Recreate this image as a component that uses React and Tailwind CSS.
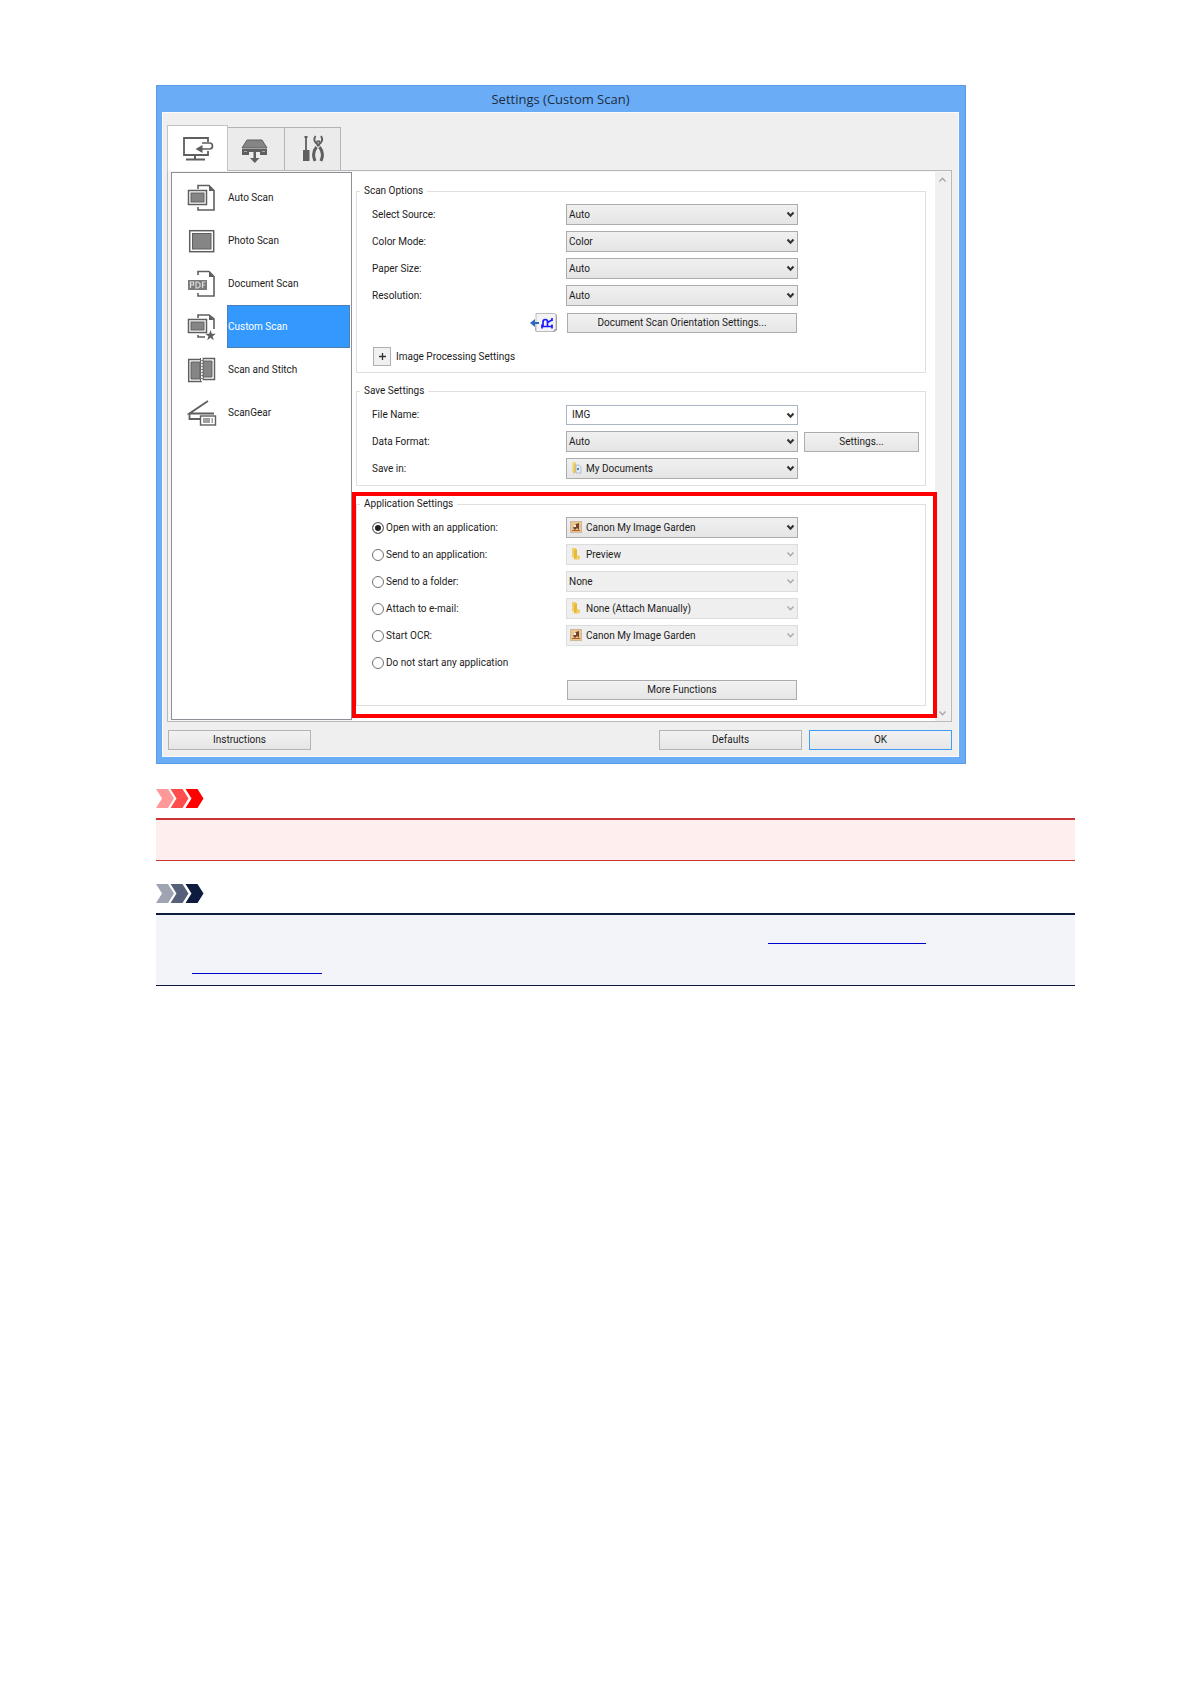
import React from "react";

const G = "#5f5f5f";

function Chevron({ dim, className }) {
  return (
    <svg className={className || "pointer-events-none absolute right-[3px] top-[7px] h-[7px] w-[9px]"} viewBox="0 0 9 7" fill="none" aria-hidden="true">
      <path d="M1.5 1.5 4.5 4.7 7.5 1.5" stroke={dim ? "#a8a8a8" : "#333"} strokeWidth={dim ? 1.4 : 2.1} />
    </svg>
  );
}

function FolderIcon() {
  return (
    <svg viewBox="0 0 12 14" className="h-[14px] w-[12px]" aria-hidden="true">
      <path d="M2 1h4v8l-4 2z" fill="#f3d067" />
      <path d="M4 3l3-1v9l-3 2z" fill="#e6b93c" />
      <path d="M7 8l3 1v3l-4 1z" fill="#f0cd6b" />
    </svg>
  );
}

function DocumentsIcon() {
  return (
    <svg viewBox="0 0 12 14" className="h-[14px] w-[12px]" aria-hidden="true">
      <path d="M2 1h4v8l-4 2z" fill="#f5dc8d" />
      <path d="M4 3l2-1v9l-3 2z" fill="#e9c65f" />
      <path d="M6 4h3l2 2v6H6z" fill="#e4ebf2" stroke="#9fb0c0" strokeWidth=".7" />
      <path d="M7 7h2v2H7z" fill="#4e86bd" />
    </svg>
  );
}

function GardenIcon() {
  return (
    <svg viewBox="0 0 12 14" className="h-[14px] w-[12px]" aria-hidden="true">
      <rect x=".5" y="1.5" width="11" height="11" fill="#f0c48d" stroke="#c9b8a4" />
      <path d="M3 8 6 4l3-1v7l-2-2-2 2z" fill="#6d4630" />
      <path d="M4 5h2v2H4z" fill="#fff0d8" />
      <path d="M2 10.5h8" stroke="#a65f28" />
    </svg>
  );
}

const optionIcons = { folder: FolderIcon, documents: DocumentsIcon, garden: GardenIcon };

function Select({ id, label, value, icon, disabled }) {
  const Icon = optionIcons[icon];
  return (
    <div className="relative h-[21px]">
      <select
        id={id}
        aria-label={label}
        disabled={disabled}
        className={
          "block h-[21px] w-full appearance-none border pr-5 text-[10px] leading-4 text-[#1c1c1c] opacity-100 " +
          (disabled ? "border-[#dcdcdc] bg-[#efefef] " : "border-[#acacac] bg-linear-to-b from-[#f0f0f0] to-[#e5e5e5] ") +
          (icon ? "pl-[19px]" : "pl-[2px]")
        }
      >
        <option>{value}</option>
      </select>
      {Icon && <span className="pointer-events-none absolute left-1 top-[3px]"><Icon /></span>}
      <Chevron dim={disabled} />
    </div>
  );
}

function Button({ children, className }) {
  return (
    <button type="button" className={"h-5 border bg-linear-to-b from-[#f2f2f2] to-[#e6e6e6] text-center leading-4 " + className}>
      {children}
    </button>
  );
}

function Row({ children }) {
  return <div className="grid h-[27px] grid-cols-[194px_232px_minmax(0,1fr)] items-center pl-[15px]">{children}</div>;
}

function Group({ title, children, className }) {
  return (
    <fieldset className={"min-w-0 border border-[#dfdfdf] pt-[2px] " + className}>
      <legend className="ml-[3px] px-1 leading-4">{title}</legend>
      {children}
    </fieldset>
  );
}

function Page() {
  return (
    <>
      <path d="M11 5V1.5h11l5 5V26H11v-3" fill="none" stroke={G} strokeWidth="1.6" />
      <path d="M22 1.5V7h5z" fill={G} />
    </>
  );
}

function AutoIcon() {
  return (
    <svg viewBox="0 0 30 28" className="h-7 w-[30px]" aria-hidden="true">
      <Page />
      <rect x="1.5" y="6.5" width="18" height="14" fill="#fff" stroke={G} strokeWidth="1.5" />
      <rect x="4" y="9" width="13" height="9" fill="#858585" stroke={G} />
    </svg>
  );
}
function PhotoIcon() {
  return (
    <svg viewBox="0 0 30 28" className="h-7 w-[30px]" aria-hidden="true">
      <rect x="2.7" y="3.7" width="24" height="21" fill="#fff" stroke={G} strokeWidth="1.5" />
      <rect x="5.5" y="6.5" width="18.500" height="15.500" fill="#858585" stroke={G} />
    </svg>
  );
}
function DocumentIcon() {
  return (
    <svg viewBox="0 0 30 28" className="h-7 w-[30px]" aria-hidden="true">
      <Page />
      <rect x="1" y="10" width="19" height="10" fill="#7b7b7b" />
      <path d="M3.500 18v-6h3v3h-3M9 18v-6h2l2 1.500v3L11 18zM15.500 18v-6h3M15.500 15h2.500" fill="none" stroke="#ddd" strokeWidth="1.200" />
    </svg>
  );
}
function CustomIcon() {
  return (
    <svg viewBox="0 0 30 28" className="h-7 w-[30px]" aria-hidden="true">
      <path d="M11 5V2h11l5 4v10M11 22v2h7" fill="none" stroke={G} strokeWidth="1.6" />
      <path d="M22 1.500V7h5z" fill={G} />
      <rect x="1.500" y="6.500" width="18" height="13" fill="#fff" stroke={G} strokeWidth="1.500" />
      <rect x="4" y="9" width="13" height="8" fill="#858585" stroke={G} />
      <path d="m23.500 17 1.300 3.800h4l-3.200 2.400 1.200 4-3.300-2.400-3.300 2.400 1.200-4-3.200-2.400h4z" fill={G} />
    </svg>
  );
}
function StitchIcon() {
  return (
    <svg viewBox="0 0 30 28" className="h-7 w-[30px]" aria-hidden="true">
      <path d="M14 3.500H1.700v22H14z" fill="#fff" stroke={G} strokeWidth="1.500" />
      <path d="M4 6h9v17H4z" fill="#858585" stroke={G} />
      <path d="M16 2.500h11.500v21H16z" fill="#fff" stroke={G} strokeWidth="1.500" />
      <path d="M16 5h9v16h-9z" fill="#858585" stroke={G} />
      <path d="M14.800 2v24" stroke="#fff" strokeWidth="1.500" strokeDasharray="2 1" />
      <path d="M13.500 2v24" stroke={G} strokeDasharray="2 1" />
    </svg>
  );
}
function GearIcon() {
  return (
    <svg viewBox="0 0 30 28" className="h-7 w-[30px]" aria-hidden="true">
      <path d="M21 2 2.500 14.500H27M2.500 14.500V20H13" fill="none" stroke={G} strokeWidth="1.800" />
      <rect x="13.500" y="17" width="15" height="9" fill="#fff" stroke={G} strokeWidth="1.400" />
      <path d="M16 19h7v5h-7zM24.500 19H26v5h-1.500z" fill="#a0a0a0" />
    </svg>
  );
}

const scanModes = [
  ["Auto Scan", AutoIcon],
  ["Photo Scan", PhotoIcon],
  ["Document Scan", DocumentIcon],
  ["Custom Scan", CustomIcon],
  ["Scan and Stitch", StitchIcon],
  ["ScanGear", GearIcon],
];

const scanOptions = [
  ["source", "Select Source:", "Auto"],
  ["mode", "Color Mode:", "Color"],
  ["paper", "Paper Size:", "Auto"],
  ["resolution", "Resolution:", "Auto"],
];

const actions = [
  ["open", "Open with an application:", "Canon My Image Garden", "garden"],
  ["send", "Send to an application:", "Preview", "folder"],
  ["folder", "Send to a folder:", "None", null],
  ["mail", "Attach to e-mail:", "None (Attach Manually)", "folder"],
  ["ocr", "Start OCR:", "Canon My Image Garden", "garden"],
  ["none", "Do not start any application", null, null],
];

function Tabs() {
  return (
    <div role="tablist" className="flex h-[45px] items-end">
      <button type="button" role="tab" aria-selected="true" aria-label="Scanning from a computer" className="relative -mb-px flex h-[46px] w-[61px] items-center justify-center border border-b-0 border-[#c4c4c4] bg-white">
        <svg viewBox="0 0 32 26" className="h-[26px] w-8" fill="none" stroke={G} aria-hidden="true">
          <path d="M26 6V2H2v17h24v-4" strokeWidth="1.800" />
          <path d="M13 19v4M4 23.500h19" strokeWidth="2" />
          <path d="M20 7h7.500q3 0 3 3t-3 3H18" strokeWidth="1.700" />
          <path d="m13.500 13 7-4v8z" fill={G} stroke="none" />
        </svg>
      </button>
      <button type="button" role="tab" aria-selected="false" aria-label="Scanning from the operation panel" className="flex h-[43px] w-[57px] items-center justify-center border border-b-0 border-l-0 border-[#b4b4b4] bg-[#ebebeb]">
        <svg viewBox="0 0 28 26" className="mr-[2px] mt-1 h-[26px] w-7" aria-hidden="true">
          <path d="M6 2h15l5 8H1z" fill="#858585" stroke={G} />
          <path d="M1 11h25v6h-7v-3H8v3H1z" fill={G} />
          <path d="M3 13.500h3M21 13.500h3" stroke="#aaa" />
          <path d="M12.500 14h2.500v6h3.500l-4.700 5L9 20h3.500z" fill={G} />
        </svg>
      </button>
      <button type="button" role="tab" aria-selected="false" aria-label="General settings" className="flex h-[43px] w-[56px] items-center justify-center border border-b-0 border-l-0 border-[#b4b4b4] bg-[#ebebeb]">
        <svg viewBox="0 0 24 28" className="h-7 w-6" aria-hidden="true">
          <path d="M5 1v14M3.500 2h3" stroke={G} strokeWidth="1.800" />
          <path d="M2 15h6.500v11H2z" fill={G} />
          <path d="M14.500 1q-2.500 4 .5 7l3.500 3M20 1q2.500 4-.5 7L16 11M15.500 6.500h3.500" fill="none" stroke={G} strokeWidth="1.900" />
          <path d="M15.500 12q-5 6-1.500 14M18.500 12q5 6 1.500 14" fill="none" stroke={G} strokeWidth="3" />
        </svg>
      </button>
    </div>
  );
}

function Arrows({ colors }) {
  return (
    <svg viewBox="0 0 48 19" className="block h-[19px] w-12" aria-hidden="true">
      <path d="M0 0h12l6 9.500-6 9.500H0l6-9.500z" fill={colors[0]} />
      <path d="M14.500 0h12l6 9.500-6 9.500h-12l6-9.500z" fill={colors[1]} />
      <path d="M29.500 0h12l6 9.500-6 9.500h-12l6-9.500z" fill={colors[2]} />
    </svg>
  );
}

function SettingsWindow() {
  return (
    <section className="w-full max-w-[810px] border border-[#5a9ae6] bg-[#6aacf6] pb-[6px] pl-[5px] pr-[6px] text-[10px] text-[#1c1c1c]">
      <h1 className="flex h-[26px] items-center justify-center font-['Open_Sans'] text-[13px] leading-5 text-[#1d2c40]">Settings (Custom Scan)</h1>
      <div className="border border-[#fafafa] bg-[#efefef] pb-[6px] pl-1 pr-[6px] pt-3">
        <Tabs />
        <div className="flex border border-[#b9b9b9] bg-[#f4f4f4] pl-[3px] pt-px">
          <nav className="mb-px w-[181px] shrink-0 border border-[#8b9097] bg-white pt-[3px]">
            {scanModes.map(([name, Icon]) => (
              <div key={name} className="flex h-[43px] items-center pl-[15px] pr-px">
                <Icon />
                <button
                  type="button"
                  className={"ml-[10px] h-[43px] flex-1 border text-left " + (name === "Custom Scan" ? "border-[#4c7fb4] bg-[#3399ff] text-white" : "border-transparent")}
                >
                  {name}
                </button>
              </div>
            ))}
          </nav>
          <main className="min-w-0 flex-1 bg-white pb-[3px] pt-[11px]">
            <Group title="Scan Options" className="ml-1 mr-[9px] pb-[6px]">
              {scanOptions.map(([id, label, value]) => (
                <Row key={id}>
                  <label htmlFor={id}>{label}</label>
                  <Select id={id} value={value} />
                </Row>
              ))}
              <div className="grid h-7 grid-cols-[194px_232px] items-center pl-[15px]">
                <svg viewBox="0 0 28 20" className="mr-2 h-5 w-7 justify-self-end" aria-hidden="true">
                  <path d="M7 1h19l1 2v14l-3 2H7l-2-2z" fill="#8d8d8d" />
                  <path d="M6 .5h18q2 0 2 2v13l-3 3H6z" fill="#f4f4f4" stroke="#bcbcbc" />
                  <path d="M0 10l5-4v3h4v2H5v3z" fill="#2e67c0" />
                  <path d="M11.500 13.500h11M12 11.500v4M22 11.500v4M13 13V9q0-2.500 2.300-2.500T17.500 9v4M17.500 9.500 22 7M22 5v3" fill="none" stroke="#1a1aff" strokeWidth="1.700" />
                </svg>
                <Button className="mx-px border-[#acacac]">Document Scan Orientation Settings...</Button>
              </div>
              <div className="mt-[10px] flex h-[19px] items-center pl-4">
                <button type="button" aria-label="Expand Image Processing Settings" className="flex h-[19px] w-[18px] items-center justify-center border border-[#b0b0b0] bg-[#f0f0f0]">
                  <svg viewBox="0 0 7 7" className="h-[7px] w-[7px]" aria-hidden="true"><path d="M3.500 0v7M0 3.500h7" stroke="#333" strokeWidth="1.300" /></svg>
                </button>
                <span className="ml-[5px]">Image Processing Settings</span>
              </div>
            </Group>

            <Group title="Save Settings" className="ml-1 mr-[9px] mt-[10px] pb-[3px]">
              <Row>
                <label htmlFor="file">File Name:</label>
                <div className="relative">
                  <input id="file" type="text" defaultValue="IMG" className="block h-5 w-full border border-[#abb5c4] bg-white pl-[5px] pr-5 leading-4" />
                  <Chevron />
                </div>
              </Row>
              <Row>
                <label htmlFor="format">Data Format:</label>
                <Select id="format" value="Auto" />
                <Button className="ml-[6px] w-[115px] border-[#acacac]">Settings...</Button>
              </Row>
              <Row>
                <label htmlFor="savein">Save in:</label>
                <Select id="savein" value="My Documents" icon="documents" />
              </Row>
            </Group>

            <div className="relative z-10 -mr-[2px] mt-[6px] border-4 border-[#ff0000] pb-2">
              <Group title="Application Settings" className="mr-[7px] pb-px">
                {actions.map(([id, label, value, icon]) => (
                  <Row key={id}>
                    <label className="flex items-center whitespace-nowrap">
                      <input
                        type="radio"
                        name="action"
                        defaultChecked={id === "open"}
                        className="mr-[2px] h-3 w-3 shrink-0 appearance-none rounded-full border border-[#707070] bg-white checked:bg-[#222] checked:shadow-[inset_0_0_0_2px_white]"
                      />
                      {label}
                    </label>
                    {value && <Select id={id} label={label} value={value} icon={icon} disabled={id !== "open"} />}
                  </Row>
                ))}
                <div className="grid h-7 grid-cols-[194px_232px] items-center pl-[15px]">
                  <Button className="col-start-2 mx-px border-[#acacac]">More Functions</Button>
                </div>
              </Group>
            </div>
          </main>
          <div className="mr-px flex w-[15px] shrink-0 flex-col items-center justify-between bg-[#f0f0f0] py-1">
            <Chevron dim className="h-[7px] w-[9px] rotate-180" />
            <Chevron dim className="h-[7px] w-[9px]" />
          </div>
        </div>
        <div className="mt-2 flex gap-[7px] pl-px">
          <Button className="mr-auto w-[143px] border-[#b4b4b4]">Instructions</Button>
          <Button className="w-[143px] border-[#b4b4b4]">Defaults</Button>
          <Button className="w-[143px] border-[#3f9df5]">OK</Button>
        </div>
      </div>
    </section>
  );
}

export default function App() {
  return (
    <div className="bg-white pb-16 pl-[156px] pr-[116px] pt-[85px] font-['Roboto','Noto_Sans',sans-serif]">
      <SettingsWindow />
      <section className="mt-[25px]">
        <Arrows colors={["#ff9999", "#ff4d4d", "#ff0000"]} />
        <div className="mt-[10px] border-b border-t-2 border-[#cc3333] bg-[#ffeeee] py-5" />
      </section>
      <section className="mt-[23px]">
        <Arrows colors={["#9fa4b3", "#566079", "#0d1b3e"]} />
        <div className="mt-[10px] flex flex-col border-b border-t-2 border-[#0d1b3e] bg-[#f3f4fa] pb-[11px] pl-[36px]">
          <a href="#more" aria-label="More details" className="ml-[576px] h-[29px] w-[158px] border-b border-[#0000cc]" />
          <a href="#dialog" aria-label="Settings dialog" className="h-[30px] w-[130px] border-b border-[#0000cc]" />
        </div>
      </section>
    </div>
  );
}
